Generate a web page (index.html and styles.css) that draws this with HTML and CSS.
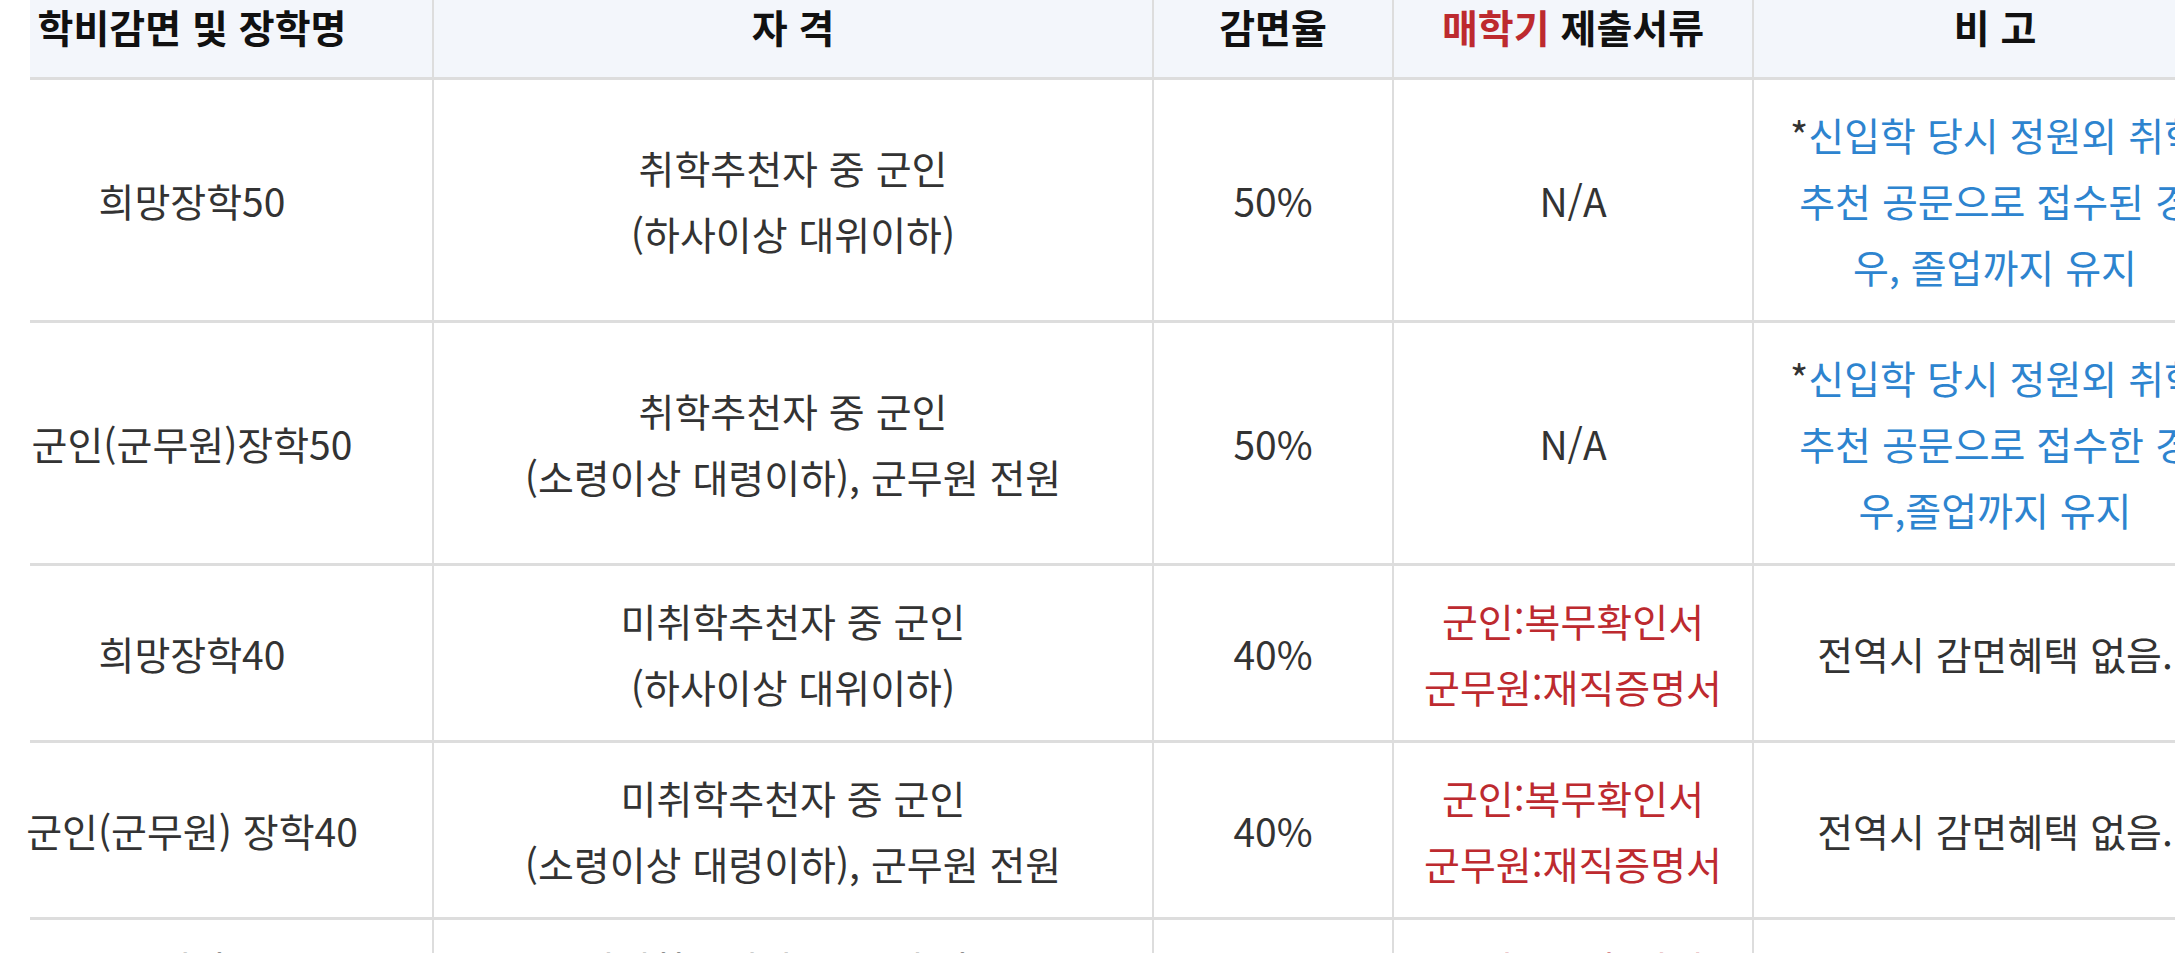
FILE: index.html
```html
<!DOCTYPE html>
<html lang="ko">
<head>
<meta charset="utf-8">
<title>학비감면 및 장학</title>
<link rel="stylesheet" href="styles.css">
</head>
<body>
<div class="sheet">
  <div class="grid">
    <div class="cell head c1">학비감면 및 장학명</div>
    <div class="cell head">자 격</div>
    <div class="cell head">감면율</div>
    <div class="cell head"><span class="red">매학기</span>&nbsp;제출서류</div>
    <div class="cell head last">비 고</div>

    <div class="cell c1">희망장학50</div>
    <div class="cell">취학추천자 중 군인<br>(하사이상 대위이하)</div>
    <div class="cell">50%</div>
    <div class="cell">N/A</div>
    <div class="cell last note"><p><span class="star">*</span><span class="blue">신입학 당시 정원외 취학추천 공문으로 접수된 경우, 졸업까지 유지</span></p></div>

    <div class="cell c1">군인(군무원)장학50</div>
    <div class="cell">취학추천자 중 군인<br>(소령이상 대령이하), 군무원 전원</div>
    <div class="cell">50%</div>
    <div class="cell">N/A</div>
    <div class="cell last note"><p><span class="star">*</span><span class="blue">신입학 당시 정원외 취학추천 공문으로 접수한 경우,졸업까지 유지</span></p></div>

    <div class="cell c1">희망장학40</div>
    <div class="cell">미취학추천자 중 군인<br>(하사이상 대위이하)</div>
    <div class="cell">40%</div>
    <div class="cell red">군인:복무확인서<br>군무원:재직증명서</div>
    <div class="cell last">전역시 감면혜택 없음.</div>

    <div class="cell c1">군인(군무원) 장학40</div>
    <div class="cell">미취학추천자 중 군인<br>(소령이상 대령이하), 군무원 전원</div>
    <div class="cell">40%</div>
    <div class="cell red">군인:복무확인서<br>군무원:재직증명서</div>
    <div class="cell last">전역시 감면혜택 없음.</div>

    <div class="cell c1 top">군인가족<br>장학30</div>
    <div class="cell top">미취학추천자 중 군인 가족<br>(배우자 및 자녀)</div>
    <div class="cell">30%</div>
    <div class="cell red top">군인:복무확인서<br>가족관계증명서</div>
    <div class="cell last">전역시 감면혜택 없음.</div>
  </div>
</div>
</body>
</html>
```

FILE: styles.css
```css
html, body {
  margin: 0;
  padding: 0;
  background: #ffffff;
  overflow: hidden;
}

body {
  font-family: "Noto Sans CJK KR", "Noto Sans", sans-serif;
  color: #333333;
}

.sheet {
  width: 2175px;
  height: 953px;
  overflow: hidden;
}

.grid {
  display: grid;
  grid-template-columns: 404px 720px 240px 360px 482px;
  width: 2206px;
  margin-left: 30px;
}

.cell {
  box-sizing: border-box;
  display: flex;
  align-items: center;
  justify-content: center;
  text-align: center;
  font-size: 39px;
  line-height: 66px;
  padding: 21px 0;
  border-right: 2px solid #dddddd;
  border-bottom: 3px solid #dddddd;
  white-space: nowrap;
}

.cell.top {
  align-items: flex-start;
  padding-top: 15px;
}

.cell.last {
  border-right: none;
}

.cell.c1 {
  padding-right: 78px;
}

.head {
  height: 80px;
  padding: 0 0 25px 0;
  background: #f3f6fb;
  color: #111111;
  font-weight: 700;
  line-height: 52px;
}

.head.c1 {
  padding-right: 78px;
}

.note {
  white-space: normal;
  padding-left: 32px;
  padding-right: 32px;
}

.note p {
  margin: 0;
}

.star {
  color: #333333;
}

.blue {
  color: #2d84cf;
}

.red {
  color: #bd2a2f;
}
```
